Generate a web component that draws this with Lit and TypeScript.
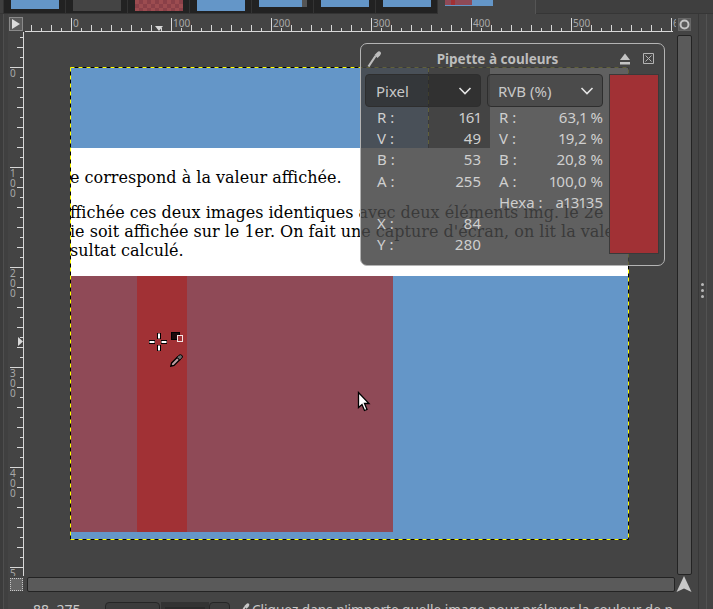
import { LitElement, html, css, svg } from 'lit';
import { customElement } from 'lit/decorators.js';

// thumbnails in the image tab strip
const TABS = [
  { h: 9, kind: 'blue' },
  { h: 11, kind: 'grey' },
  { h: 11, kind: 'check' },
  { h: 11, kind: 'blue' },
  { h: 7, kind: 'side' },
  { h: 7, kind: 'blue' },
  { h: 7, kind: 'blue' },
];

const READINGS = [
  ['R :', '161', 'R :', '63,1 %'],
  ['V :', '49', 'V :', '19,2 %'],
  ['B :', '53', 'B :', '20,8 %'],
  ['A :', '255', 'A :', '100,0 %'],
  ['', '', 'Hexa :', 'a13135'],
  ['X :', '84', '', ''],
  ['Y :', '280', '', ''],
];

const chevron = html`<svg class="chev" width="14" height="8" viewBox="0 0 14 8">
  <path d="M1.5 1 L7 6.5 L12.5 1" fill="none" stroke="#e4e4e4" stroke-width="1.6" />
</svg>`;

const pipette = (size: number, color: string) => html`<svg width=${size} height=${size} viewBox="0 0 16 16">
  <path d="M1.5 15.5 L8.5 5" fill="none" stroke=${color} stroke-width="2.2" />
  <path d="M7.5 4 L10 1.5 Q12 -0.5 13.5 1 Q14.5 2.5 13 4.5 L10.5 7 Z" fill=${color} />
</svg>`;

@customElement('app-root')
export class AppRoot extends LitElement {
  static styles = css`
    :host {
      display: flex;
      flex-direction: column;
      width: 713px;
      height: 609px;
      overflow: hidden;
      background: #444;
      font-family: 'Noto Sans', sans-serif;
      font-size: 14px;
      color: #c8c8c8;
    }
    .tabs {
      display: flex;
      flex: none;
      height: 14px;
      padding-left: 3px;
      background: #3f3f3f;
      box-shadow: inset 0 -1px 0 #363636;
    }
    .tab {
      width: 62px;
      padding-left: 7px;
      box-sizing: border-box;
      background: #222;
      border-left: 1px solid #333;
      border-bottom: 1px solid #333;
    }
    .tab.active {
      width: 99px;
      padding-left: 7px;
      background: #444;
      border-bottom: none;
      border-right: 1px solid #555;
    }
    .thumb {
      width: 48px;
      background: #6496c8;
    }
    .thumb.grey {
      background: #444;
    }
    .thumb.check {
      background: repeating-conic-gradient(#8a4048 0 25%, #9c4c50 0 50%) 0 0 / 8px 8px;
    }
    .thumb.side {
      background: linear-gradient(90deg, #6496c8 43px, #555 43px);
    }
    .thumb.current {
      height: 6px;
      background: #6496c8;
    }
    .thumb.current div {
      width: 27px;
      height: 5px;
      background: linear-gradient(90deg, #8f4a57 6px, #a13135 6px, #a13135 10px, #8f4a57 10px);
    }
    .body {
      flex: 1;
      display: flex;
      min-height: 0;
    }
    .edge {
      flex: none;
      width: 8px;
      background: #404040;
      box-sizing: border-box;
      box-shadow: inset 3px 0 0 #3c3c3c, inset 4px 0 0 #4e4e4e;
    }
    .work {
      flex: none;
      width: 684px;
      display: grid;
      grid-template-columns: 16px 652px 16px;
      grid-template-rows: 3px 15px 544px 17px 1fr;
    }
    .gap {
      grid-column: 1 / 4;
    }
    .corner {
      display: flex;
      align-items: flex-start;
      justify-content: center;
    }
    .corner.right {
      padding-top: 1px;
    }
    .play {
      width: 14px;
      height: 14px;
      box-sizing: border-box;
      background: #5c5c5c;
      border: 1px solid #8a8a8a;
      display: flex;
      align-items: center;
      justify-content: center;
    }
    .ruler {
      display: block;
    }
    .ruler line {
      stroke: #d8d8d8;
      stroke-width: 1;
    }
    .ruler text {
      fill: #a8a8a8;
      font-family: 'Noto Sans', sans-serif;
      font-size: 10px;
    }
    .canvas {
      position: relative;
      overflow: hidden;
      background: #444;
    }
    .image {
      position: absolute;
      left: 47px;
      top: 36px;
      width: 557px;
      height: 471px;
      display: flex;
      flex-direction: column;
      background: #6496c8;
    }
    .top-band {
      flex: none;
      height: 80px;
      display: flex;
    }
    .top-band .b {
      width: 357px;
      background: #6496c8;
    }
    .top-band .d {
      width: 62px;
      background: #444;
    }
    .top-band .w {
      flex: 1;
      background: #fff;
    }
    .page {
      flex: none;
      height: 128px;
      box-sizing: border-box;
      padding-top: 20px;
      background: #fff;
      color: #000;
      font-family: 'DejaVu Serif', serif;
      font-size: 16px;
      line-height: 19px;
      white-space: nowrap;
      overflow: hidden;
    }
    .page p {
      margin: 0 0 16px -1px;
    }
    .shot {
      flex: none;
      height: 256px;
      width: 322px;
      display: flex;
      background: #8f4a57;
    }
    .stripe {
      width: 50px;
      margin-left: 66px;
      background: #a13135;
    }
    .marching {
      position: absolute;
      left: 0;
      top: 0;
      pointer-events: none;
    }
    .over {
      position: absolute;
    }
    .picker {
      position: absolute;
      left: 336px;
      top: 11px;
      width: 305px;
      height: 223px;
      box-sizing: border-box;
      padding: 0 5px 0 4px;
      border: 1px solid #b4b4b4;
      border-radius: 7px;
      background: rgba(68, 68, 68, 0.85);
    }
    .title {
      display: flex;
      align-items: center;
      height: 29px;
      margin: 0 0 1px 2px;
      font-size: 13.5px;
      font-weight: 700;
      color: #bdbdbd;
    }
    .title .name {
      flex: 1;
      text-align: center;
      padding-right: 7px;
    }
    .title .tools {
      display: flex;
      align-items: center;
      gap: 12px;
      padding-right: 5px;
    }
    .content {
      display: grid;
      grid-template-columns: 116px 116px 50px;
      column-gap: 6px;
      font-size: 15px;
    }
    .side {
      display: flex;
      flex-direction: column;
    }
    .combo {
      display: flex;
      align-items: center;
      justify-content: space-between;
      height: 33px;
      box-sizing: border-box;
      padding: 0 8px 0 10px;
      border: 1px solid #2e2e2e;
      border-radius: 4px;
      background: rgba(35, 35, 35, 0.55);
      color: #c8c8c8;
    }
    .combo.soft {
      background: rgba(68, 68, 68, 0.75);
    }
    .cells {
      display: grid;
      grid-template-columns: 1fr auto;
      grid-auto-rows: 21.2px;
      align-items: center;
      padding: 0 0 0 12px;
      color: #cfcfcf;
      line-height: 21px;
      font-variant-numeric: proportional-nums;
    }
    .cells .val {
      text-align: right;
    }
    .swatch {
      height: 180px;
      box-sizing: border-box;
      background: #a13135;
      border: 1px solid #3a3a3a;
    }
    .vscroll {
      display: flex;
      justify-content: center;
      padding-top: 3px;
      box-sizing: border-box;
    }
    .thumbbar {
      box-sizing: border-box;
      background: #5a5a5a;
      border: 1px solid #232323;
      border-radius: 2px;
    }
    .vscroll .thumbbar {
      width: 15px;
      height: 540px;
    }
    .mask {
      display: flex;
      align-items: center;
      justify-content: center;
    }
    .mask div {
      width: 11px;
      height: 11px;
      border: 1px dotted #c8c8c8;
      background: #666;
    }
    .hscroll {
      padding: 1px 0 0 3px;
    }
    .hscroll .thumbbar {
      width: 648px;
      height: 15px;
    }
    .nav {
      display: flex;
      justify-content: center;
    }
    .status {
      grid-column: 1 / 4;
      display: flex;
      align-items: center;
      height: 28px;
      padding: 0 0 0 25px;
      margin-top: 2px;
      white-space: nowrap;
      color: #c8c8c8;
    }
    .status .coords {
      width: 72px;
      flex: none;
      color: #c8c8c8;
    }
    .status .box {
      display: flex;
      align-items: center;
      justify-content: flex-end;
      flex: none;
      height: 28px;
      box-sizing: border-box;
      border: 1px solid #262626;
      border-radius: 4px;
      background: #3c3c3c;
      margin-top: 14px;
    }
    .status .units {
      width: 55px;
      padding-right: 7px;
    }
    .status .zoom {
      width: 48px;
      margin: 14px 0 0 1px;
      height: 28px;
      box-sizing: border-box;
      padding: 5px 4px 0;
      flex: none;
      background: #333;
      color: #bbb;
      font-size: 12px;
    }
    .status .zoom span {
      display: block;
      background: #2a2a2a;
      text-align: center;
    }
    .status .more {
      width: 21px;
      justify-content: center;
    }
    .status .hint {
      display: flex;
      align-items: center;
      gap: 1px;
      margin-left: 8px;
      overflow: hidden;
      width: 460px;
      font-size: 13.6px;
    }
    .dock {
      flex: 1;
      position: relative;
      background: #434343;
      box-shadow: inset 6px 0 0 #444, inset 7px 0 0 #383838, inset 14px 0 0 #444, inset 15px 0 0 #525252;
    }
    .grip {
      position: absolute;
      left: 9px;
      top: 269px;
      display: flex;
      flex-direction: column;
      gap: 3px;
    }
    .grip i {
      width: 3px;
      height: 3px;
      border-radius: 50%;
      background: #b8b8b8;
    }
  `;

  private hRuler() {
    const ticks = [];
    for (let x = -40; x <= 600; x += 10) {
      const px = x + 47.5;
      const len = x % 100 === 0 ? 13 : x % 20 === 0 ? 6 : 3;
      ticks.push(svg`<line x1=${px} x2=${px} y1=${14 - len} y2="14"></line>`);
      if (x % 100 === 0) ticks.push(svg`<text x=${px + 1.5} y="10">${x}</text>`);
    }
    return html`<svg class="ruler" width="652" height="15">
      ${ticks}<line x1="1" x2="649" y1="14.5" y2="14.5"></line>
      <path d="M131 9 h8 l-4 5 z" fill="#d8d8d8" />
    </svg>`;
  }

  private vRuler() {
    const ticks = [];
    for (let y = -30; y <= 500; y += 10) {
      const py = y + 35.5;
      const len = y % 100 === 0 ? 13 : y % 20 === 0 ? 6 : 3;
      ticks.push(svg`<line x1=${15 - len} x2="15" y1=${py} y2=${py}></line>`);
      if (y % 100 === 0) {
        [...String(y)].forEach((d, i) => {
          ticks.push(svg`<text x="2" y=${py + 9 + i * 10}>${d}</text>`);
        });
      }
    }
    return html`<svg class="ruler" width="16" height="544">
      ${ticks}<line x1="15.5" x2="15.5" y1="0" y2="544"></line>
      <path d="M10 305 L15 309.5 L10 314 Z" fill="#d8d8d8" />
    </svg>`;
  }

  private marching() {
    const d = 'M46.5 35.5 H604.5 V507.5 H46.5 Z M404.5 36 V116';
    return html`<svg class="marching" width="652" height="544">
      <path d=${d} fill="none" stroke="#000" stroke-width="1" />
      <path d=${d} fill="none" stroke="#ffff00" stroke-width="1" stroke-dasharray="4 4" />
    </svg>`;
  }

  private pickerCursor() {
    return html`<svg class="over" style="left:124px;top:300px" width="40" height="40" viewBox="0 0 40 40">
        <g stroke="#000" stroke-width="4"><path d="M11 1 v6 M11 13 v6 M1 10 h6 M13 10 h6" /></g>
        <g stroke="#fff" stroke-width="2"><path d="M11 1.5 v5 M11 13.5 v5 M1.5 10 h5 M13.5 10 h5" /></g>
        <rect x="23.5" y="0.5" width="8" height="7" fill="#1c0a0c" stroke="#000" />
        <rect x="29.5" y="3.5" width="5" height="6" fill="#a13135" stroke="#f4e4e4" />
      </svg>
      <svg class="over" style="left:146px;top:322px" width="13" height="13" viewBox="0 0 16 16">
        <path d="M1 15 L2 11 L9 4 L12 7 L5 14 Z" fill="#b89ca0" stroke="#000" stroke-width="1.6" />
        <path d="M8.5 4 L11 1.5 Q13 0 15 2 Q16 4 14.5 5 L12 7.5 Z" fill="#6a6a6a" stroke="#000" stroke-width="1.2" />
      </svg>
      <svg class="over" style="left:333px;top:359px" width="14" height="22" viewBox="0 0 14 22">
        <path d="M1.5 1.5 V16.5 L5 13.5 L7.5 19.5 L10 18.5 L7.5 12.5 H12 Z" fill="#fff" stroke="#000" stroke-width="1.3" />
      </svg>`;
  }

  private picker() {
    return html`<div class="picker">
      <div class="title">
        ${pipette(16, '#bdbdbd')}
        <span class="name">Pipette à couleurs</span>
        <span class="tools">
          <svg width="12" height="12" viewBox="0 0 12 12">
            <path d="M6 0.5 L11 7 H1 Z M1 9 H11 V11.5 H1 Z" fill="#c4c4c4" />
          </svg>
          <svg width="11" height="11" viewBox="0 0 11 11">
            <path d="M0.5 0.5 H10.5 V10.5 H0.5 Z M2.5 2.5 L8.5 8.5 M8.5 2.5 L2.5 8.5" fill="none" stroke="#b4b4b4" />
          </svg>
        </span>
      </div>
      <div class="content">
        <div class="side">
          <div class="combo"><span>Pixel</span>${chevron}</div>
          <div class="cells">
            ${READINGS.map((r) => html`<span>${r[0]}</span><span class="val">${r[1]}</span>`)}
          </div>
        </div>
        <div class="side">
          <div class="combo soft"><span>RVB (%)</span>${chevron}</div>
          <div class="cells">
            ${READINGS.map((r) => html`<span>${r[2]}</span><span class="val">${r[3]}</span>`)}
          </div>
        </div>
        <div class="swatch"></div>
      </div>
    </div>`;
  }

  render() {
    return html`
      <div class="tabs">
        ${TABS.map(
          (t) => html`<div class="tab">
            <div class="thumb ${t.kind}" style="height:${t.h}px"></div>
          </div>`,
        )}
        <div class="tab active"><div class="thumb current"><div></div></div></div>
      </div>
      <div class="body">
        <div class="edge"></div>
        <div class="work">
          <div class="gap"></div>
          <div class="corner">
            <div class="play">
              <svg width="10" height="10" viewBox="0 0 10 10"><path d="M1 0 L9 5 L1 10 Z" fill="#dcdcdc" /></svg>
            </div>
          </div>
          ${this.hRuler()}
          <div class="corner right">
            <svg width="13" height="13" viewBox="0 0 13 13">
              <rect x="0.5" y="0.5" width="12" height="12" fill="#5a5a5a" stroke="#666" />
              <circle cx="6.5" cy="6.5" r="4" fill="none" stroke="#c4c4c4" stroke-width="2" />
            </svg>
          </div>
          ${this.vRuler()}
          <div class="canvas">
            <div class="image">
              <div class="top-band"><div class="b"></div><div class="d"></div><div class="w"></div></div>
              <div class="page">
                <p>e correspond à la valeur affichée.</p>
                <p>
                  ffichée ces deux images identiques avec deux éléments img. le 2e<br />
                  ie soit affichée sur le 1er. On fait une capture d'écran, on lit la valeur du<br />
                  sultat calculé.
                </p>
              </div>
              <div class="shot"><div class="stripe"></div></div>
            </div>
            ${this.marching()} ${this.pickerCursor()} ${this.picker()}
          </div>
          <div class="vscroll"><div class="thumbbar"></div></div>
          <div class="mask"><div></div></div>
          <div class="hscroll"><div class="thumbbar"></div></div>
          <div class="nav">
            <svg width="16" height="17" viewBox="0 0 16 17"><path d="M8 0 L15.5 16 L8 12.5 L0.5 16 Z" fill="#c8c8c8" /></svg>
          </div>
          <div class="status">
            <span class="coords">88, 275</span>
            <div class="box units">${chevron}</div>
            <div class="zoom"><span>100 %</span></div>
            <div class="box more">${chevron}</div>
            <div class="hint">
              ${pipette(13, '#c8c8c8')}
              <span>Cliquez dans n'importe quelle image pour prélever la couleur de p</span>
            </div>
          </div>
        </div>
        <div class="dock">
          <div class="grip"><i></i><i></i><i></i></div>
        </div>
      </div>
    `;
  }
}
